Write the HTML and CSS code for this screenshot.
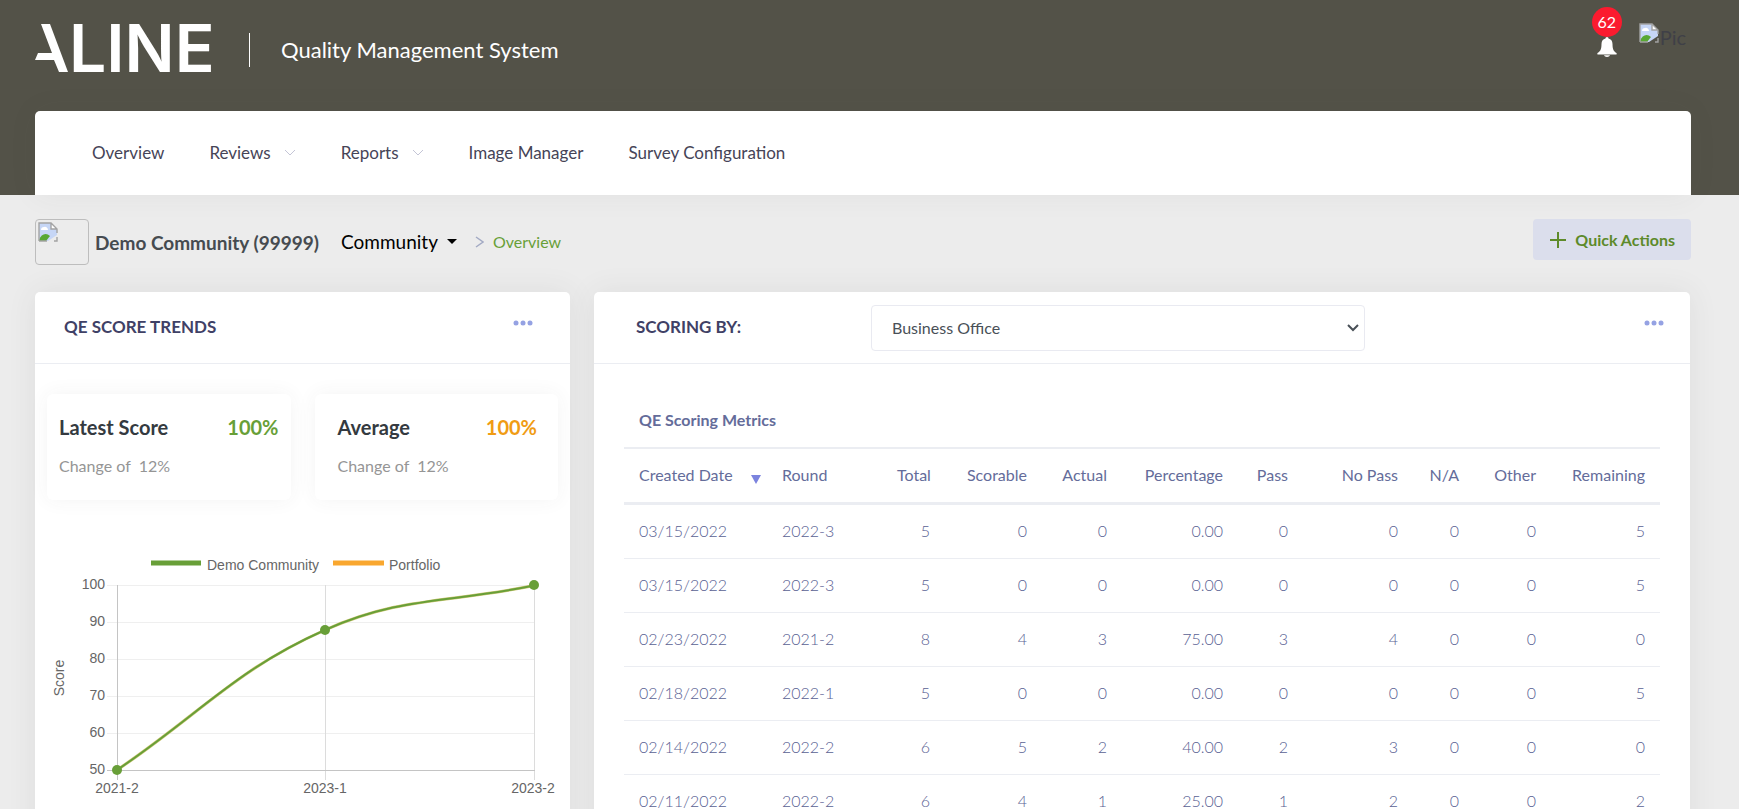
FILE: index.html
```html
<!DOCTYPE html>
<html lang="en">

<head>
    <meta charset="UTF-8">
    <meta name="viewport" content="width=device-width, initial-scale=1.0">
    <title>Quality Management System</title>
    <link rel="stylesheet" href="styles.css">
</head>

<body>
    <svg class="defs" aria-hidden="true">
        <symbol id="broken" viewBox="0 0 20 20">
            <path d="M1 1h12l6 6v6l-9 6H1z" fill="#c6d6f6" />
            <path d="M3 8a3 3 0 0 1 3-3 3 3 0 0 1 4 3z" fill="#fff" />
            <path d="M1 18c2-6 7-8 11-4l-4 5H1z" fill="#58a833" />
            <path d="M13 1v6h6z" fill="#fff" />
            <path d="M1 19V1h12l6 6v4M13 1v6h6M1 19h8M16 19h3v-4" fill="none" stroke="#a3a3a3" stroke-width="1.4" />
        </symbol>
        <symbol id="dots" viewBox="0 0 20 6">
            <circle cx="3" cy="3" r="2.5" /><circle cx="10" cy="3" r="2.5" /><circle cx="17" cy="3" r="2.5" />
        </symbol>
    </svg>

    <header class="header">
        <div class="topbar">
            <svg class="logo" viewBox="0 0 180 50" role="img" aria-label="ALINE">
                <path d="M6 1h9l18 48h-9l-5-12H0l3-7h14z" fill="#fff" />
                <text x="34" y="49">LINE</text>
            </svg>
            <h1 class="title">Quality Management System</h1>
            <div class="user">
                <a class="bell" href="#" aria-label="Notifications">
                    <span class="count">62</span>
                    <svg width="20" height="20" viewBox="0 0 20 20">
                        <path d="M10 0c1 0 1.500 1 1.500 1.500C14 2 15.500 4 15.500 7c0 6 1.500 7.500 4 9 .5 1 0 1.500-.5 1.500H1C.5 17.500 0 17 .5 16c2.500-1.500 4-3 4-9 0-3 1.500-5 4-5.500C8.500 1 9 0 10 0zM7 18.300h6c-.5 1.200-1.500 1.700-3 1.700s-2.500-.5-3-1.700z" fill="#fff" />
                    </svg>
                </a>
                <a class="pic" href="#"><svg width="20" height="20"><use href="#broken" /></svg>Pic</a>
            </div>
        </div>
        <nav class="nav">
            <a href="#">Overview</a>
            <a href="#">Reviews <svg class="down" viewBox="0 0 12 7"><path d="M1 1l5 5 5-5" /></svg></a>
            <a href="#">Reports <svg class="down" viewBox="0 0 12 7"><path d="M1 1l5 5 5-5" /></svg></a>
            <a href="#">Image Manager</a>
            <a href="#">Survey Configuration</a>
        </nav>
    </header>

    <main class="content">
        <div class="subheader">
            <span class="thumb"><svg width="20" height="20"><use href="#broken" /></svg></span>
            <h2 class="community">Demo Community (99999)</h2>
            <button class="switch" type="button">Community <span class="caret"></span></button>
            <svg class="right" viewBox="0 0 9 12"><path d="M1 1l7 5-7 5" /></svg>
            <a class="crumb" href="#">Overview</a>
            <button class="quick" type="button">
                <svg width="18" height="18" viewBox="0 0 18 18"><path d="M9 1v16M1 9h16" /></svg>
                Quick Actions
            </button>
        </div>

        <div class="cards">
            <section class="card">
                <div class="cardHead">
                    <h3>QE SCORE TRENDS</h3>
                    <button class="more" type="button" aria-label="More"><svg width="20" height="6"><use href="#dots" /></svg></button>
                </div>
                <div class="scores">
                    <div class="score">
                        <div class="scoreTop"><strong>Latest Score</strong><strong class="green">100%</strong></div>
                        <p>Change of &nbsp;12%</p>
                    </div>
                    <div class="score average">
                        <div class="scoreTop"><strong>Average</strong><strong class="orange">100%</strong></div>
                        <p>Change of &nbsp;12%</p>
                    </div>
                </div>
                <svg class="chart" viewBox="0 0 535 300" role="img" aria-label="Score by round">
                    <path class="key" d="M116 23h50" stroke="#689f38" />
                    <path class="key" d="M298 23h51" stroke="#f9a72f" />
                    <text x="172" y="30">Demo Community</text>
                    <text x="354" y="30">Portfolio</text>
                    <path class="grid" d="M72 45.500H500M72 82.500H500M72 119.500H500M72 156.500H500M72 193.500H500" />
                    <path class="grid dark" d="M290.500 45V240M499.500 45V240" />
                    <path class="axis" d="M82.500 45V240M72 230.500H500" />
                    <g text-anchor="end">
                        <text x="70" y="49">100</text>
                        <text x="70" y="86">90</text>
                        <text x="70" y="123">80</text>
                        <text x="70" y="160">70</text>
                        <text x="70" y="197">60</text>
                        <text x="70" y="234">50</text>
                    </g>
                    <g text-anchor="middle">
                        <text x="82" y="253">2021-2</text>
                        <text x="290" y="253">2023-1</text>
                        <text x="498" y="253">2023-2</text>
                        <text transform="translate(29 138) rotate(-90)">Score</text>
                    </g>
                    <path class="under" d="M82 230C165 174 200 130 290 90C366 56 415 63 499 45.500" />
                    <path class="line" d="M82 230C165 174 200 130 290 90C366 56 415 63 499 45.500" />
                    <circle cx="82" cy="230" r="5" /><circle cx="290" cy="90" r="5" /><circle cx="499" cy="45" r="5" />
                </svg>
            </section>

            <section class="card">
                <div class="cardHead scoring">
                    <h3><label for="scoringBy">SCORING BY:</label></h3>
                    <div class="select">
                        <select id="scoringBy">
                            <option>Business Office</option>
                        </select>
                        <svg width="12" height="8" viewBox="0 0 12 8"><path d="M1 1l5 5 5-5" /></svg>
                    </div>
                    <button class="more" type="button" aria-label="More"><svg width="20" height="6"><use href="#dots" /></svg></button>
                </div>
                <div class="metrics">
                    <table>
                        <caption>QE Scoring Metrics</caption>
                        <colgroup>
                            <col class="w143"><col class="w115"><col class="w63"><col class="w97"><col class="w80"><col class="w116"><col class="w65"><col class="w110"><col class="w61"><col class="w77"><col class="w109">
                        </colgroup>
                        <thead>
                            <tr>
                                <th><span class="sort">Created Date <svg width="10" height="9" viewBox="0 0 10 9"><path d="M0 0h10L5 9z" fill="#7b83de" /></svg></span></th>
                                <th>Round</th><th>Total</th><th>Scorable</th><th>Actual</th><th>Percentage</th><th>Pass</th><th>No Pass</th><th>N/A</th><th>Other</th><th>Remaining</th>
                            </tr>
                        </thead>
                        <tbody>
                            <tr><td>03/15/2022</td><td>2022-3</td><td>5</td><td>0</td><td>0</td><td>0.00</td><td>0</td><td>0</td><td>0</td><td>0</td><td>5</td></tr>
                            <tr><td>03/15/2022</td><td>2022-3</td><td>5</td><td>0</td><td>0</td><td>0.00</td><td>0</td><td>0</td><td>0</td><td>0</td><td>5</td></tr>
                            <tr><td>02/23/2022</td><td>2021-2</td><td>8</td><td>4</td><td>3</td><td>75.00</td><td>3</td><td>4</td><td>0</td><td>0</td><td>0</td></tr>
                            <tr><td>02/18/2022</td><td>2022-1</td><td>5</td><td>0</td><td>0</td><td>0.00</td><td>0</td><td>0</td><td>0</td><td>0</td><td>5</td></tr>
                            <tr><td>02/14/2022</td><td>2022-2</td><td>6</td><td>5</td><td>2</td><td>40.00</td><td>2</td><td>3</td><td>0</td><td>0</td><td>0</td></tr>
                            <tr><td>02/11/2022</td><td>2022-2</td><td>6</td><td>4</td><td>1</td><td>25.00</td><td>1</td><td>2</td><td>0</td><td>0</td><td>2</td></tr>
                        </tbody>
                    </table>
                </div>
            </section>
        </div>
    </main>
</body>

</html>
```
FILE: styles.css
```css
* {margin: 0; padding: 0; box-sizing: border-box;}
body {height: 100vh; overflow: hidden; background: #ececec; color: #464457; font-family: Lato, sans-serif; font-size: 16px;}
a {color: inherit; text-decoration: none;}
button {border: 0; background: none; font: inherit; color: inherit; cursor: pointer;}
svg {display: block; flex: none;}
.defs {position: absolute; width: 0; height: 0;}

/* header */
.header {padding: 0 48px 0 35px; background: #535248;}
.topbar {display: flex; height: 111px;}
.logo {width: 180px; height: 50px; margin-top: 23px; overflow: visible;}
.logo text {font: 600 66px Inter, sans-serif; fill: #fff;}
.title {align-self: flex-start; margin: 33px 0 0 34px; padding-left: 31px; border-left: 1px solid #fff; color: #fff; font-size: 22px; font-weight: 400; line-height: 34px;}
.user {display: flex; gap: 17px; margin-left: auto; padding: 7px 5px 0 0;}
.bell {display: flex; flex-direction: column; align-items: center;}
.count {width: 30px; height: 30px; border-radius: 50%; background: #fb1b2f; color: #fff; font-size: 16px; line-height: 30px; text-align: center;}
.pic {display: flex; gap: 1px; height: 40px; padding-top: 16px; color: #3f4047; font-size: 20px; line-height: 28px;}

.nav {display: flex; gap: 45px; height: 84px; padding: 0 57px 2px; align-items: center; background: #fff; border-radius: 5px 5px 0 0; font-size: 17px; box-shadow: 0 0 30px rgba(60, 60, 60, .06);}
.nav a {display: flex; align-items: center; gap: 13px;}
.down {width: 12px; height: 7px; fill: none; stroke: #c4c5d6;}

/* breadcrumb row */
.content {padding: 0 48px 0 35px;}
.subheader {display: flex; align-items: center; padding: 24px 0 27px;}
.thumb {width: 54px; height: 46px; padding: 2px; border: 1px solid #bdbdbd; border-radius: 4px;}
.community {margin-left: 6px; color: #464b50; font-size: 19px; font-weight: 700;}
.switch {display: flex; align-items: center; gap: 9px; margin-left: 22px; padding-bottom: 2px; color: #000; font-size: 19px;}
.caret {border: 5px solid transparent; border-top-color: #000; border-bottom: 0;}
.right {width: 9px; height: 12px; margin: 0 9px 0 18px; fill: none; stroke: #a3aac4; stroke-width: 1.5;}
.crumb {padding-bottom: 2px; color: #689f38;}
.quick {display: flex; align-items: center; align-self: flex-start; gap: 8px; height: 41px; margin-left: auto; padding: 0 16px; border-radius: 4px; background: #dbdeec; color: #5d8a2a; font-weight: 700;}
.quick path {stroke: #5d8a2a; stroke-width: 2;}

/* cards */
.cards {display: grid; grid-template-columns: 535fr 1096fr; gap: 24px; padding-right: 1px;}
.card {min-height: 560px; background: #fff; border-radius: 5px; box-shadow: 0 0 30px rgba(60, 60, 60, .08);}
.cardHead {display: flex; align-items: center; height: 72px; padding: 0 37px 0 29px; border-bottom: 1px solid #ebedf2;}
.cardHead h3 {padding-bottom: 2px; color: #3f4166; font-size: 17px; font-weight: 700;}
.more {margin-left: auto; padding: 4px 0 14px; fill: #95a2e3;}
.scoring {display: grid; grid-template-columns: 235fr 494fr 299fr; padding: 0 26px 0 42px;}
.select {display: grid; align-items: center;}
.select > * {grid-area: 1 / 1;}
.select select {width: 100%; height: 46px; padding: 0 20px; appearance: none; border: 1px solid #e9eaf1; border-radius: 4px; background: #fff; color: #495057; font: 16px Lato, sans-serif;}
.select svg {justify-self: end; margin-right: 6px; fill: none; stroke: #495057; stroke-width: 2; pointer-events: none;}

/* score trends */
.scores {display: grid; grid-template-columns: 1fr 1fr; gap: 24px; padding: 30px 12px 0;}
.score {height: 106px; padding: 21px 12px; border-radius: 6px; box-shadow: 0 0 20px rgba(60, 60, 60, .06);}
.average {padding: 21px 21px 21px 23px;}
.scoreTop {display: flex; justify-content: space-between; color: #343a40; font-size: 20px; line-height: 24px;}
.scoreTop .green {color: #689f38;}
.scoreTop .orange {color: #f09c14;}
.score p {margin-top: 15px; color: #959595; line-height: 24px;}
.chart {width: 100%; margin-top: 40px;}
.chart text {fill: #666; font: 14px "Liberation Sans", Arial, sans-serif;}
.chart circle {fill: #689f38;}
.key {stroke-width: 5;}
.grid {stroke: #efefef;}
.dark {stroke: #dcdcdc;}
.axis {stroke: #c4c4c4;}
.line, .under {fill: none; stroke: #689f38; stroke-width: 2;}
.under {stroke: #cfc777; stroke-width: 3;}

/* metrics table */
.metrics {padding: 30px 30px 0;}
table {width: 100%; table-layout: fixed; border-collapse: separate; border-spacing: 0; color: #646c9a;}
caption {height: 53px; padding: 16px 15px 0; color: #646c9a; font-weight: 700; line-height: 20px; text-align: left;}
th, td {padding: 0 15px 2px; text-align: right; white-space: nowrap;}
th {height: 58px; border-top: 2px solid #ebedf2; border-bottom: 3px solid #ebedf2; font-weight: 400;}
td {height: 54px; border-bottom: 1px solid #ebedf2; color: #596193; font-weight: 300;}
th:nth-child(-n+2), td:nth-child(-n+2) {text-align: left;}
.sort {display: flex; align-items: center; gap: 18px;}
.sort svg {margin-top: 9px;}
.w143 {width: 143px;}
.w115 {width: 115px;}
.w63 {width: 63px;}
.w97 {width: 97px;}
.w80 {width: 80px;}
.w116 {width: 116px;}
.w65 {width: 65px;}
.w110 {width: 110px;}
.w61 {width: 61px;}
.w77 {width: 77px;}
.w109 {width: 109px;}
```
